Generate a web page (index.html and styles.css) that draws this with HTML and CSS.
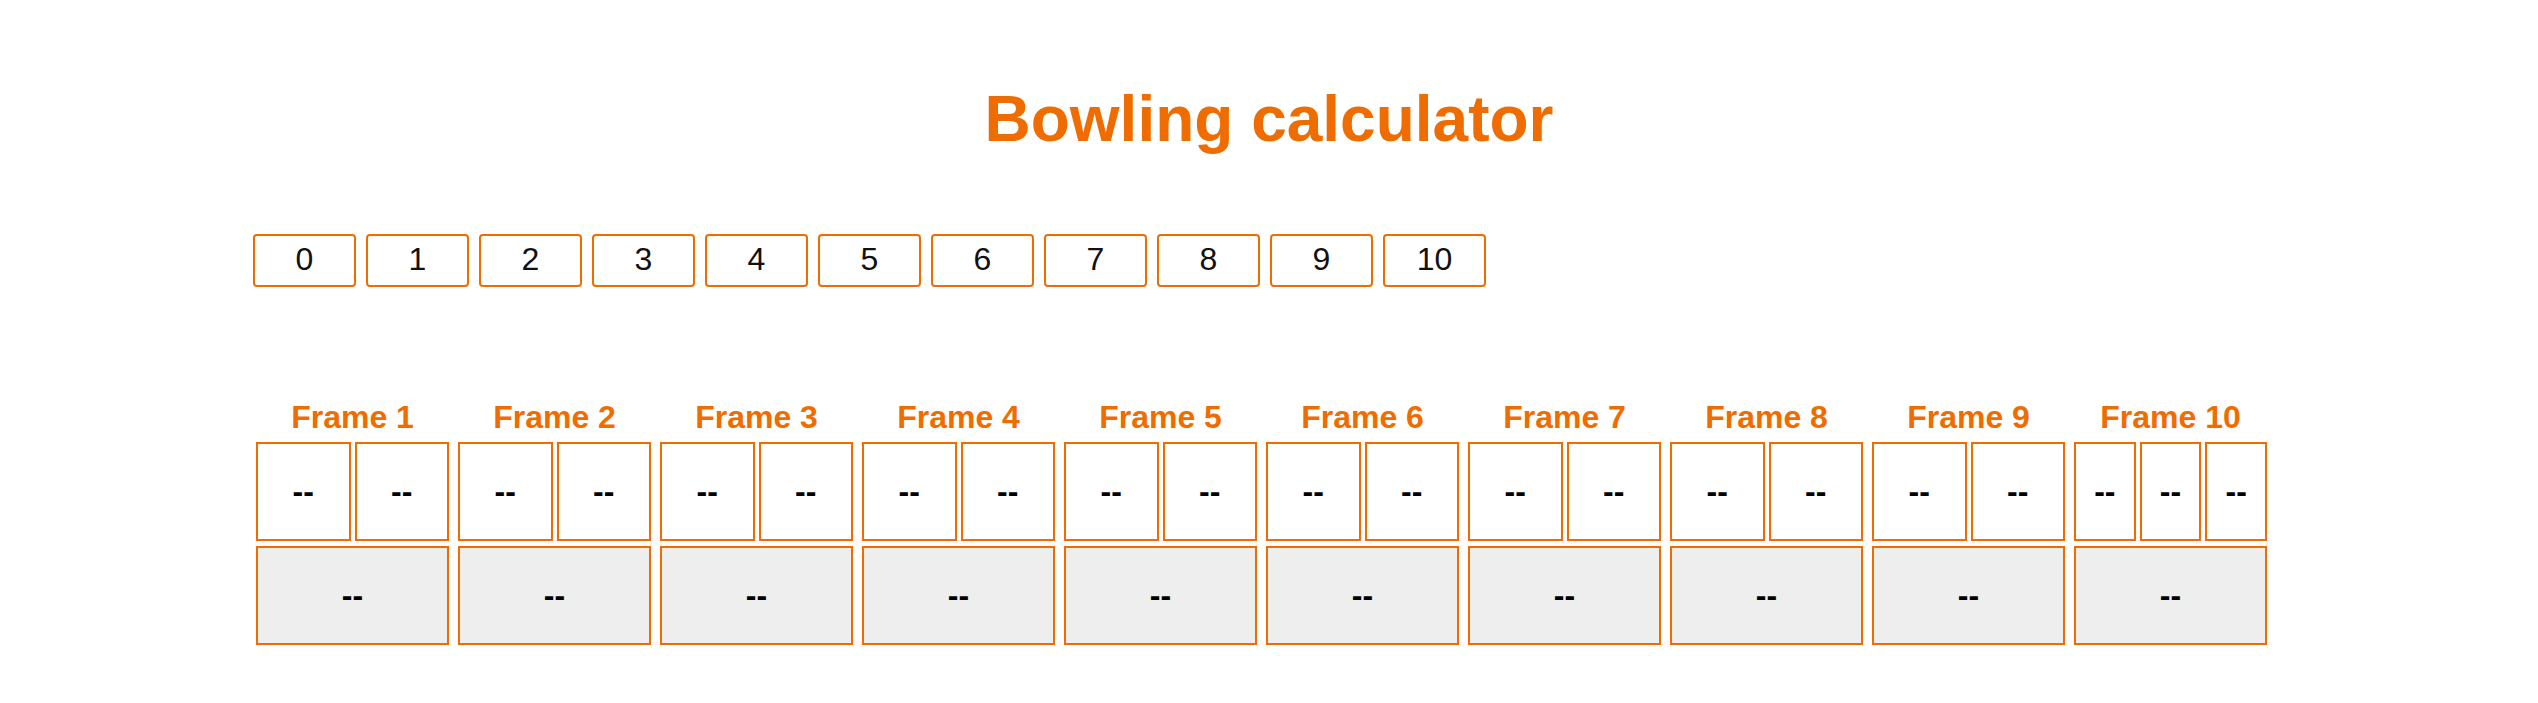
FILE: index.html
```html
<!DOCTYPE html>
<html lang="en">
<head>
<meta charset="utf-8">
<title>Bowling calculator</title>
<link rel="stylesheet" href="styles.css">
</head>
<body>
<div class="app">
  <h1 class="title">Bowling calculator</h1>
  <div class="pins">
    <button class="pin">0</button>
    <button class="pin">1</button>
    <button class="pin">2</button>
    <button class="pin">3</button>
    <button class="pin">4</button>
    <button class="pin">5</button>
    <button class="pin">6</button>
    <button class="pin">7</button>
    <button class="pin">8</button>
    <button class="pin">9</button>
    <button class="pin">10</button>
  </div>
  <div class="frames">
    <div class="frame"><div class="frame-label">Frame 1</div><div class="rolls"><div class="roll">--</div><div class="roll">--</div></div><div class="score">--</div></div>
    <div class="frame"><div class="frame-label">Frame 2</div><div class="rolls"><div class="roll">--</div><div class="roll">--</div></div><div class="score">--</div></div>
    <div class="frame"><div class="frame-label">Frame 3</div><div class="rolls"><div class="roll">--</div><div class="roll">--</div></div><div class="score">--</div></div>
    <div class="frame"><div class="frame-label">Frame 4</div><div class="rolls"><div class="roll">--</div><div class="roll">--</div></div><div class="score">--</div></div>
    <div class="frame"><div class="frame-label">Frame 5</div><div class="rolls"><div class="roll">--</div><div class="roll">--</div></div><div class="score">--</div></div>
    <div class="frame"><div class="frame-label">Frame 6</div><div class="rolls"><div class="roll">--</div><div class="roll">--</div></div><div class="score">--</div></div>
    <div class="frame"><div class="frame-label">Frame 7</div><div class="rolls"><div class="roll">--</div><div class="roll">--</div></div><div class="score">--</div></div>
    <div class="frame"><div class="frame-label">Frame 8</div><div class="rolls"><div class="roll">--</div><div class="roll">--</div></div><div class="score">--</div></div>
    <div class="frame"><div class="frame-label">Frame 9</div><div class="rolls"><div class="roll">--</div><div class="roll">--</div></div><div class="score">--</div></div>
    <div class="frame"><div class="frame-label">Frame 10</div><div class="rolls"><div class="roll">--</div><div class="roll">--</div><div class="roll">--</div></div><div class="score">--</div></div>
  </div>
</div>
</body>
</html>
```

FILE: styles.css
```css
* {
  box-sizing: border-box;
}

body {
  margin: 0;
  background: #ffffff;
  font-family: "Liberation Sans", Arial, Helvetica, sans-serif;
  color: #000000;
}

.app {
  padding-top: 82px;
  padding-left: 253px;
}

.title {
  margin: 0 0 0 -253px;
  text-align: center;
  font-size: 64px;
  line-height: 74px;
  font-weight: bold;
  color: #ef6c00;
}

.pins {
  display: flex;
  gap: 10px;
  margin-top: 78px;
}

.pin {
  width: 103px;
  height: 53px;
  padding: 0 0 3px 0;
  border: 2px solid #ef6c00;
  border-radius: 4px;
  background: #ffffff;
  font-family: "Liberation Sans", Arial, Helvetica, sans-serif;
  font-size: 32px;
  line-height: 37px;
  color: #111111;
  cursor: pointer;
}

.frames {
  display: flex;
  gap: 9px;
  margin-top: 112px;
  margin-left: 3px;
}

.frame {
  width: 193px;
  display: flex;
  flex-direction: column;
}

.frame-label {
  text-align: center;
  font-size: 32px;
  line-height: 37px;
  font-weight: bold;
  color: #ef6c00;
  margin-bottom: 6px;
}

.rolls {
  display: flex;
  gap: 4px;
}

.roll {
  flex: 1;
  height: 99px;
  border: 2px solid #ef6c00;
  display: flex;
  align-items: center;
  justify-content: center;
  font-size: 32px;
  font-weight: bold;
}

.score {
  margin-top: 5px;
  height: 99px;
  border: 2px solid #ef6c00;
  background: #eeeeee;
  display: flex;
  align-items: center;
  justify-content: center;
  font-size: 32px;
  font-weight: bold;
}
```
